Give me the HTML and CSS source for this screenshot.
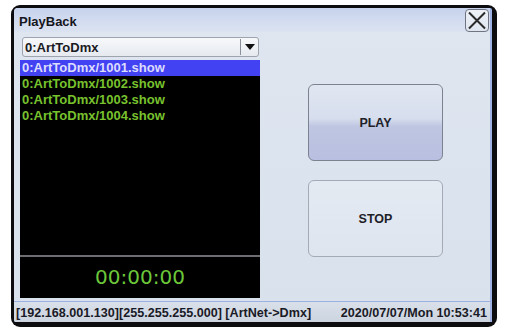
FILE: index.html
```html
<!DOCTYPE html>
<html>
<head>
<meta charset="utf-8">
<link rel="stylesheet" href="styles.css">
</head>
<body>
<div class="bezel">
  <div class="window">
    <div class="titlebar">
      <span class="title">PlayBack</span>
      <div class="close">
        <svg width="22" height="21" viewBox="0 0 22 21"><path d="M3 2.5 L19 18.5 M19 2.5 L3 18.5" stroke="#2a2a2a" stroke-width="2" fill="none"/></svg>
      </div>
    </div>
    <div class="main">
      <div class="left">
        <div class="dropdown">
          <span class="dd-text">0:ArtToDmx</span>
          <span class="dd-btn"><svg width="10" height="6" viewBox="0 0 10 6"><path d="M0 0 H10 L5 6 Z" fill="#111"/></svg></span>
        </div>
        <div class="panel">
          <ul class="list">
            <li class="item selected">0:ArtToDmx/1001.show</li>
            <li class="item">0:ArtToDmx/1002.show</li>
            <li class="item">0:ArtToDmx/1003.show</li>
            <li class="item">0:ArtToDmx/1004.show</li>
          </ul>
          <div class="sep"></div>
          <div class="time">00:00:00</div>
        </div>
      </div>
      <div class="right">
        <button class="btn play">PLAY</button>
        <button class="btn stop">STOP</button>
      </div>
    </div>
    <div class="status">
      <span>[192.168.001.130][255.255.255.000] [ArtNet-&gt;Dmx]</span>
      <span>2020/07/07/Mon 10:53:41</span>
    </div>
  </div>
</div>
</body>
</html>
```
FILE: styles.css
```css
* { box-sizing: border-box; }
body {
  margin: 0;
  background: #ffffff;
  font-family: "Liberation Sans", Arial, sans-serif;
}
.bezel {
  margin: 5px 0 0 11px;
  width: 486px;
  height: 322px;
  padding: 3px 5px 5px 3px;
  background: #0d0d0f;
  border-radius: 9px;
}
.window {
  height: 100%;
  display: flex;
  flex-direction: column;
  background: linear-gradient(180deg, #dfe6f0 0%, #dbe3ee 60%, #d9e1ec 100%);
  border-right: 2px solid #9fb2e4;
  border-radius: 4px 2px 0 2px;
  overflow: hidden;
}
.titlebar {
  height: 24px;
  display: flex;
  align-items: center;
  justify-content: space-between;
  padding-left: 5px;
  background: linear-gradient(180deg, #c6d2ec 0%, #d4ddf0 60%, #dbe3f1 100%);
}
.title {
  font-size: 13px;
  font-weight: bold;
  color: #15151c;
  padding-top: 3px;
}
.close {
  width: 24px;
  height: 23px;
  margin-right: 1px;
  margin-top: 1px;
  border: 1px solid #6f7480;
  border-radius: 4px;
  background: linear-gradient(180deg, #eef2f8 0%, #dfe5ef 100%);
  display: flex;
  align-items: center;
  justify-content: center;
}
.main {
  flex: 1;
  display: flex;
  padding-left: 6px;
  padding-bottom: 3px;
}
.left {
  width: 240px;
  display: flex;
  flex-direction: column;
  padding-top: 5px;
}
.dropdown {
  height: 20px;
  margin: 0 1px 0 2px;
  border: 1px solid #9ea4ae;
  border-radius: 3px;
  background: linear-gradient(180deg, #f7f8fa 0%, #e6eaf0 100%);
  display: flex;
  align-items: center;
  justify-content: space-between;
}
.dd-text {
  font-size: 13px;
  font-weight: bold;
  color: #1a1a22;
  padding-left: 2px;
}
.dd-btn {
  height: 16px;
  width: 18px;
  border-left: 1px solid #8a8f98;
  display: flex;
  align-items: center;
  justify-content: center;
}
.panel {
  flex: 1;
  margin-top: 3px;
  background: #000;
  display: flex;
  flex-direction: column;
}
.list {
  list-style: none;
  margin: 0;
  padding: 0;
  height: 195px;
}
.item {
  height: 16px;
  line-height: 16px;
  font-size: 13px;
  font-weight: bold;
  color: #78c22e;
  padding-left: 2px;
}
.item.selected {
  background: #4242f2;
  color: #dcdcff;
}
.sep {
  height: 2px;
  background: #6e6e72;
}
.time {
  flex: 1;
  display: flex;
  align-items: center;
  justify-content: center;
  font-family: "DejaVu Sans", sans-serif;
  font-size: 20px;
  color: #6cc83a;
  padding-bottom: 1px;
}
.right {
  margin-left: 48px;
  padding-top: 52px;
  display: flex;
  flex-direction: column;
  gap: 19px;
}
.btn {
  width: 135px;
  height: 77px;
  border-radius: 6px;
  font-family: "Liberation Sans", Arial, sans-serif;
  font-size: 12.5px;
  font-weight: bold;
  color: #202028;
  padding: 0;
}
.play {
  border: 1px solid #7d8290;
  background: linear-gradient(180deg, #e1e7f1 0%, #d6dded 45%, #bfc6e2 55%, #b8bfe0 100%);
}
.stop {
  border: 1px solid #a4aab6;
  background: linear-gradient(180deg, #e4eaf2 0%, #dfe5ef 100%);
}
.status {
  height: 21px;
  border-top: 1px solid #9db0e2;
  background: linear-gradient(180deg, #d9e0ea 0%, #ccd4e0 100%);
  display: flex;
  align-items: center;
  justify-content: space-between;
  padding: 1px 3px 0 2px;
  font-size: 12.6px;
  font-weight: bold;
  color: #1a1a26;
}
```
